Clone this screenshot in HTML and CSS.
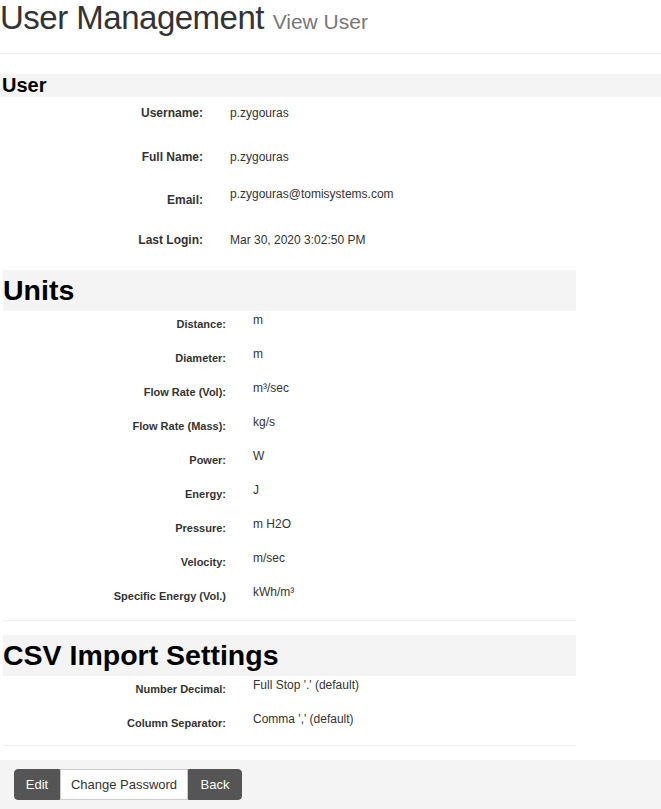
FILE: index.html
```html
<!DOCTYPE html>
<html>
<head>
<meta charset="utf-8">
<title>User Management</title>
<link rel="stylesheet" href="styles.css">
</head>
<body>
<header class="page-header">
  <h1 class="page-title">User Management <small class="page-sub">View User</small></h1>
</header>

<section class="user-section">
  <h3 class="band band-small">User</h3>
  <div class="user-rows">
    <div class="row row-user h44"><div class="label">Username:</div><div class="value">p.zygouras</div></div>
    <div class="row row-user h43"><div class="label">Full Name:</div><div class="value">p.zygouras</div></div>
    <div class="row row-user h40"><div class="label">Email:</div><div class="value value-up">p.zygouras@tomisystems.com</div></div>
    <div class="row row-user h46"><div class="label">Last Login:</div><div class="value">Mar 30, 2020 3:02:50 PM</div></div>
  </div>
</section>

<section class="box-section">
  <h2 class="band band-large">Units</h2>
  <div class="row row-unit"><div class="label">Distance:</div><div class="value">m</div></div>
  <div class="row row-unit"><div class="label">Diameter:</div><div class="value">m</div></div>
  <div class="row row-unit"><div class="label">Flow Rate (Vol):</div><div class="value">m³/sec</div></div>
  <div class="row row-unit"><div class="label">Flow Rate (Mass):</div><div class="value">kg/s</div></div>
  <div class="row row-unit"><div class="label">Power:</div><div class="value">W</div></div>
  <div class="row row-unit"><div class="label">Energy:</div><div class="value">J</div></div>
  <div class="row row-unit"><div class="label">Pressure:</div><div class="value">m H2O</div></div>
  <div class="row row-unit"><div class="label">Velocity:</div><div class="value">m/sec</div></div>
  <div class="row row-unit"><div class="label">Specific Energy (Vol.)</div><div class="value">kWh/m³</div></div>
  <hr class="rule rule-units">
</section>

<section class="box-section csv-section">
  <h2 class="band band-large">CSV Import Settings</h2>
  <div class="row row-unit"><div class="label">Number Decimal:</div><div class="value">Full Stop '.' (default)</div></div>
  <div class="row row-unit row-last"><div class="label">Column Separator:</div><div class="value">Comma ',' (default)</div></div>
  <hr class="rule rule-csv">
</section>

<div class="action-bar">
  <div class="btn-group">
    <button class="btn btn-dark btn-edit">Edit</button><button class="btn btn-light btn-pass">Change Password</button><button class="btn btn-dark btn-back">Back</button>
  </div>
</div>
</body>
</html>
```

FILE: styles.css
```css
html, body {
  margin: 0;
  padding: 0;
  background: #fff;
}
body {
  font-family: "Liberation Sans", Arial, sans-serif;
  color: #333;
  font-size: 12px;
  width: 661px;
}

.page-header {
  height: 53px;
  border-bottom: 1px solid #eee;
  box-sizing: content-box;
}
.page-title {
  margin: 0;
  padding: 0;
  font-size: 33px;
  letter-spacing: -0.5px;
  font-weight: normal;
  line-height: 36px;
  color: #333;
}
.page-sub {
  font-size: 21px;
  letter-spacing: 0;
  color: #777;
}

.user-section {
  margin-top: 20px;
}
.band {
  margin: 0;
  background: #f4f4f4;
  color: #000;
  font-weight: bold;
}
.band-small {
  height: 23px;
  line-height: 23px;
  font-size: 20px;
  padding-left: 2px;
}
.band-large {
  height: 41px;
  line-height: 41px;
  font-size: 28.5px;
  padding-left: 0;
}

.row {
  display: grid;
  align-items: start;
}
.label {
  font-weight: bold;
  text-align: right;
  color: #333;
}
.value {
  color: #333;
  font-size: 12px;
  line-height: 16px;
}

.row-user {
  grid-template-columns: 203px 1fr;
  column-gap: 27px;
}
.row-user .label {
  font-size: 12px;
  line-height: 16px;
  padding-top: 8px;
}
.row-user .value {
  padding-top: 8px;
}
.row-user .value-up {
  padding-top: 2px;
}
.h44 { height: 44px; }
.h43 { height: 43px; }
.h40 { height: 40px; }
.h46 { height: 46px; }

.box-section {
  width: 573px;
  margin-left: 3px;
}
.row-unit {
  height: 34px;
  grid-template-columns: 223px 1fr;
  column-gap: 27px;
}
.row-unit .label {
  font-size: 11px;
  line-height: 14px;
  padding-top: 6px;
}
.row-unit .value {
  padding-top: 1px;
}

.rule {
  margin: 0;
  border: 0;
  border-top: 1px solid #eee;
  height: 0;
}
.rule-units {
  margin-top: 3px;
}
.csv-section {
  margin-top: 14px;
}
.rule-csv {
  margin-top: 1px;
}

.action-bar {
  margin-top: 14px;
  background: #f4f4f4;
  height: 49px;
  padding: 9px 0 0 14px;
  box-sizing: border-box;
}
.btn-group {
  display: flex;
}
.btn {
  font-family: "Liberation Sans", Arial, sans-serif;
  font-size: 13px;
  height: 31px;
  margin: 0;
  padding: 0;
  border: 1px solid #ccc;
  text-align: center;
  cursor: pointer;
}
.btn-dark {
  background: #555;
  border-color: #555;
  color: #fff;
}
.btn-light {
  background: #fff;
  color: #333;
}
.btn-edit {
  width: 46px;
  border-radius: 4px 0 0 4px;
}
.btn-pass {
  width: 128px;
}
.btn-back {
  width: 54px;
  border-radius: 0 4px 4px 0;
}
```
